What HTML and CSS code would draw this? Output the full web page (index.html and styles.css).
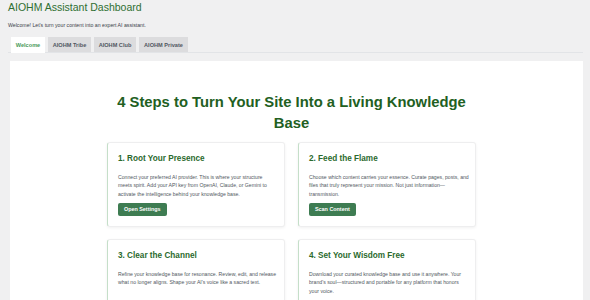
FILE: index.html
```html
<!DOCTYPE html>
<html lang="en">
<head>
<meta charset="utf-8">
<title>AIOHM Assistant Dashboard</title>
<link rel="stylesheet" href="styles.css">
</head>
<body>
<div class="wrap">
  <h1 class="page-title">AIOHM Assistant Dashboard</h1>
  <p class="intro">Welcome! Let's turn your content into an expert AI assistant.</p>
  <nav class="tabs">
    <a class="tab active">Welcome</a>
    <a class="tab">AIOHM Tribe</a>
    <a class="tab">AIOHM Club</a>
    <a class="tab">AIOHM Private</a>
  </nav>
  <main class="panel">
    <div class="steps">
      <h2 class="steps-title">4 Steps to Turn Your Site Into a Living Knowledge Base</h2>
      <div class="grid">
        <section class="card">
          <h3 class="card-title">1. Root Your Presence</h3>
          <p class="card-text">Connect your preferred AI provider. This is where your structure<br>meets spirit. Add your API key from OpenAI, Claude, or Gemini to activate the intelligence behind your knowledge base.</p>
          <a class="btn">Open Settings</a>
        </section>
        <section class="card">
          <h3 class="card-title">2. Feed the Flame</h3>
          <p class="card-text">Choose which content carries your essence. Curate pages, posts, and files that truly represent your mission. Not just information—transmission.</p>
          <a class="btn">Scan Content</a>
        </section>
        <section class="card">
          <h3 class="card-title">3. Clear the Channel</h3>
          <p class="card-text">Refine your knowledge base for resonance. Review, edit, and release what no longer aligns. Shape your AI's voice like a sacred text.</p>
          <a class="btn">Manage KB</a>
        </section>
        <section class="card">
          <h3 class="card-title">4. Set Your Wisdom Free</h3>
          <p class="card-text">Download your curated knowledge base and use it anywhere. Your brand's soul—structured and portable for any platform that honors your voice.</p>
          <a class="btn">Export KB</a>
        </section>
      </div>
    </div>
  </main>
</div>
</body>
</html>
```

FILE: styles.css
```css
html, body {
  margin: 0;
  padding: 0;
  background: #f0f0f1;
  font-family: "Liberation Sans", Arial, sans-serif;
  height: 300px;
  overflow: hidden;
}

.wrap {
  padding: 0 7px 0 8px;
}

.page-title {
  margin: 0;
  font-size: 10.5px;
  line-height: 14px;
  font-weight: 400;
  color: #2f6f32;
}

.intro {
  margin: 7px 0 0;
  font-size: 5.2px;
  line-height: 8px;
  color: #3c434a;
}

.tabs {
  display: flex;
  gap: 3px;
  margin-top: 8px;
  padding-left: 3px;
  border-bottom: 1px solid #e2e4e7;
  height: 15px;
}

.tab {
  display: flex;
  align-items: center;
  justify-content: center;
  height: 15px;
  box-sizing: border-box;
  background: #dcdcde;
  color: #50575e;
  font-size: 5.6px;
  font-weight: 700;
}

.tab:nth-child(1) { width: 34px; }
.tab:nth-child(2) { width: 43px; }
.tab:nth-child(3) { width: 42px; }
.tab:nth-child(4) { width: 49px; }

.tab.active {
  background: #fff;
  color: #4a9a5c;
  height: 16px;
}

.panel {
  margin: 8px 0 0 2px;
  background: #fff;
  padding: 31px 107px 40px 97px;
  min-height: 300px;
}

.steps-title {
  margin: 0;
  text-align: center;
  font-size: 14.8px;
  line-height: 21px;
  font-weight: 700;
  color: #22601f;
}

.grid {
  margin-top: 7.5px;
  display: grid;
  grid-template-columns: 178px 178px;
  column-gap: 13px;
  row-gap: 12px;
}

.card {
  display: flex;
  flex-direction: column;
  align-items: flex-start;
  background: #fff;
  border: 1px solid #eeeeef;
  border-left: 1px solid #c5dfc9;
  border-radius: 3px;
  box-shadow: 0 1px 3px rgba(0, 0, 0, 0.06);
  padding: 11px 5.5px 10px 10px;
  min-height: 62px;
}

.card-title {
  margin: 0;
  font-size: 8.2px;
  line-height: 10px;
  font-weight: 700;
  color: #2b6a2d;
}

.card-text {
  margin: 9.5px 0 5px;
  font-size: 5.15px;
  line-height: 8.3px;
  color: #50575e;
}

.btn {
  display: inline-block;
  margin-top: auto;
  height: 12.3px;
  line-height: 12.3px;
  padding: 0 6px;
  background: #3e7c52;
  color: #fff;
  font-size: 5.4px;
  font-weight: 700;
  border-radius: 2px;
}
```
